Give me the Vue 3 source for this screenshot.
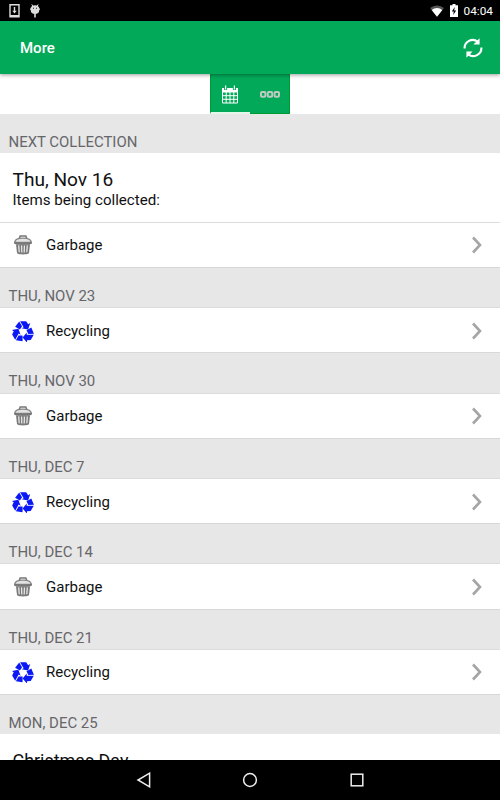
<script setup>
const collections = [
  { date: 'THU, NOV 23', type: 'recycling', label: 'Recycling' },
  { date: 'THU, NOV 30', type: 'garbage', label: 'Garbage' },
  { date: 'THU, DEC 7', type: 'recycling', label: 'Recycling' },
  { date: 'THU, DEC 14', type: 'garbage', label: 'Garbage' },
  { date: 'THU, DEC 21', type: 'recycling', label: 'Recycling' }
]

const next = {
  date: 'Thu, Nov 16',
  items: [{ type: 'garbage', label: 'Garbage' }]
}

// one section per date, the first one carries the summary
const sections = [
  { title: 'NEXT COLLECTION', summary: next, items: next.items },
  ...collections.map((c) => ({ title: c.date, items: [c] }))
]
</script>

<template>
  <div class="screen">
    <!-- shared symbols -->
    <svg class="defs" width="0" height="0">
      <symbol id="icon-garbage" viewBox="0 0 22 22">
        <path d="M7.2 4.8 8.2 2h5.6l1 2.8" fill="none" stroke="#777" stroke-width="1.6" />
        <path d="M2.8 8.4C2.8 5.2 6 4.2 11 4.2s8.2 1 8.2 4.2z" fill="#e4e4e4" stroke="#858585" stroke-width="1.3" />
        <path d="M2.2 7.6c3 1.4 14.6 1.4 17.6 0v2.2c-3 1.2-14.6 1.2-17.6 0z" fill="#777" />
        <path d="M4 10.2h14l-1 9c-2.2 1.6-9.8 1.6-12 0z" fill="#7a7a7a" />
        <path d="M6.7 11.4l.5 6.8M9.6 11.6l.2 7M12.4 11.6l-.2 7M15.3 11.4l-.5 6.8" stroke="#eee" stroke-width="1.2" />
      </symbol>
      <symbol id="icon-recycling" viewBox="-.6 -.6 23.2 23.2">
        <g id="recycle-arm" fill="#0a18f5">
          <path d="M7.9.6h6.4l2.2 3.2 2.2-1.2-2.4 6.7-6.7-1.1 2.1-1.2z" />
          <path d="M7 .9 10 5.9 7.8 9.5 2.7 6.6z" />
        </g>
        <use href="#recycle-arm" transform="rotate(120 11 11.9)" />
        <use href="#recycle-arm" transform="rotate(240 11 11.9)" />
      </symbol>
    </svg>

    <div class="status-bar">
      <div class="status-group">
        <svg width="11" height="14" viewBox="0 0 11 14">
          <path d="M1 .8h9v12H1z" fill="none" stroke="#ddd" stroke-width="1.4" />
          <path d="M1 11h9v2H1zM4.8 3h1.4v3.8h1.5L5.5 9.4 3.3 6.8h1.5z" fill="#ddd" />
        </svg>
        <svg class="bug" width="10" height="14" viewBox="0 0 10 14">
          <path d="M.8 3.6h8.4v2.8a4.2 3.4 0 0 1-8.4 0zM4.2 9h1.6v4.6H4.2z" fill="#ddd" />
          <path d="M1 4.2a4 3 0 0 1 8 0zM0 4.4h10v1.4H0z" fill="#ddd" />
          <path d="M1.8.4l1.2 2M8.2.4 7 2.4" stroke="#ddd" />
          <path d="M3 3.8h1v1H3zM6 3.8h1v1H6z" fill="#222" />
        </svg>
      </div>
      <div class="status-group">
        <svg width="14" height="12" viewBox="0 0 14 12">
          <path d="M0 3.1a10.5 10.5 0 0 1 14 0L7 11.7z" fill="#555" />
          <path d="M1.7 5.1a8 8 0 0 1 10.6 0L7 11.7z" fill="#fff" />
        </svg>
        <svg class="battery" width="8" height="13" viewBox="0 0 8 13">
          <path d="M2.5 0h3v1.3H8V13H0V1.3h2.5z" fill="#fff" />
          <path d="M4.8 3 1.8 7.5h2L3.2 11l3-4.6h-2z" fill="#000" />
        </svg>
        <span class="clock">04:04</span>
      </div>
    </div>

    <header class="app-bar">
      <h1>More</h1>
      <svg width="20" height="20" viewBox="0 0 20 20">
        <g fill="none" stroke="#fff" stroke-width="2.1">
          <path d="M1.6 10.5A8.2 8.2 0 0 1 14.7 3.6" />
          <path d="M18.4 9.5A8.2 8.2 0 0 1 5.3 16.4" />
        </g>
        <path d="M16.6.2v6.2h-6.2zM3.4 19.8v-6.2h6.2z" fill="#fff" />
      </svg>
    </header>

    <nav class="tabs">
      <button class="tab active">
        <svg width="18" height="19" viewBox="0 0 18 19">
          <path d="M1 3h16v4.5H1z" fill="#fff" />
          <path d="M1.5 7v11h15V7M1 10.7h16M1 14.3h16M5.2 7v11M9 7v11M12.8 7v11" fill="none" stroke="#fff" />
          <path d="M4.6 1v4M13.4 1v4" stroke="#02a959" stroke-width="3" />
          <path d="M4.6.5v4M13.4.5v4" stroke="#fff" stroke-width="1.2" />
        </svg>
      </button>
      <button class="tab">
        <svg width="20" height="7" viewBox="0 0 20 7">
          <g fill="none" stroke="#bdc9c1" stroke-width="2">
            <rect x="1" y="1" width="4.4" height="4.8" rx="1" />
            <rect x="7.8" y="1" width="4.4" height="4.8" rx="1" />
            <rect x="14.6" y="1" width="4.4" height="4.8" rx="1" />
          </g>
        </svg>
      </button>
    </nav>

    <main class="list">
      <section v-for="section in sections" :key="section.title">
        <h2 class="section-title">{{ section.title }}</h2>
        <div v-if="section.summary" class="summary">
          <div class="summary-date">{{ section.summary.date }}</div>
          <div class="summary-text">Items being collected:</div>
        </div>
        <div v-for="item in section.items" :key="item.label" class="row">
          <svg class="row-icon" width="22" height="22">
            <use :href="'#icon-' + item.type" />
          </svg>
          <span class="row-label">{{ item.label }}</span>
          <svg class="chevron" width="12" height="18" viewBox="0 0 12 18">
            <path d="M2 1.5 9 9l-7 7.5" fill="none" stroke="#a5a5a7" stroke-width="2.6" />
          </svg>
        </div>
      </section>
      <section>
        <h2 class="section-title">MON, DEC 25</h2>
        <div class="summary">
          <div class="holiday">Christmas Day</div>
        </div>
      </section>
    </main>

    <footer class="nav-bar">
      <svg width="16" height="16" viewBox="0 0 16 16">
        <path d="M13.6 1.2v13.6L2 8z" />
      </svg>
      <svg width="16" height="16" viewBox="0 0 16 16">
        <circle cx="8" cy="8" r="6.4" />
      </svg>
      <svg width="16" height="16" viewBox="0 0 16 16">
        <rect x="2.2" y="2.2" width="11.6" height="11.6" />
      </svg>
    </footer>
  </div>
</template>

<style>
body {
  background: #fff;
}
</style>

<style scoped>
.screen {
  display: flex;
  flex-direction: column;
  width: 500px;
  height: 800px;
  overflow: hidden;
  font-family: Roboto, "Liberation Sans", sans-serif;
  color: #111;
  background: #fff;
}

.defs {
  position: absolute;
}

.status-bar {
  flex: none;
  display: flex;
  justify-content: space-between;
  box-sizing: border-box;
  height: 21px;
  padding: 0 7px 0 9px;
  background: #000;
}

.status-group {
  display: flex;
  align-items: center;
}

.bug {
  margin-left: 10px;
}

.battery {
  margin: 0 6px;
}

.clock {
  color: #fff;
  font-size: 11.8px;
  font-weight: 400;
}

.app-bar {
  flex: none;
  display: flex;
  justify-content: space-between;
  align-items: center;
  position: relative;
  box-sizing: border-box;
  height: 53px;
  padding: 0 17px 0 20px;
  background: #02a959;
  box-shadow: 0 1px 4px rgba(0, 0, 0, 0.4);
}

.app-bar h1 {
  margin: 0;
  color: #fff;
  font-size: 15px;
  font-weight: 500;
}

.tabs {
  flex: none;
  display: flex;
  justify-content: center;
  height: 40px;
}

.tab {
  display: flex;
  justify-content: center;
  align-items: center;
  box-sizing: border-box;
  width: 40px;
  height: 40px;
  padding: 2px 0 0;
  border: 0;
  border-bottom: 1px solid #009a32;
  background: #02a959;
}

.tab:first-child {
  padding-right: 1px;
  border-left: 1px solid #009a32;
}

.tab:last-child {
  border-right: 1px solid #009a32;
}

.tab.active {
  border-bottom: 2px solid #e4f5ea;
}

.list {
  flex: 1;
  min-height: 0;
  overflow: hidden;
}

.section-title {
  box-sizing: border-box;
  height: 39.3px;
  margin: 0;
  padding: 19px 8.5px 0;
  background: #e7e7e7;
  color: #66666a;
  font-size: 14.95px;
  font-weight: 400;
  line-height: 18px;
}

.summary {
  box-sizing: border-box;
  height: 68.4px;
  padding: 15px 12.5px 0;
}

.summary-date {
  font-size: 19.1px;
  line-height: 24px;
}

.holiday {
  font-size: 17.9px;
  line-height: 23px;
}

.summary-text {
  font-size: 15.1px;
  line-height: 17px;
}

.row {
  display: flex;
  align-items: center;
  box-sizing: border-box;
  height: 46.15px;
  padding: 1px 17px 0 12px;
  border-top: 1px solid #dcdcdc;
  border-bottom: 1px solid #d8d8d8;
}

.row-label {
  flex: 1;
  margin-left: 12px;
  font-size: 15px;
}

.nav-bar {
  flex: none;
  display: flex;
  justify-content: center;
  align-items: center;
  gap: 90.5px;
  height: 40px;
  background: #000;
}

.nav-bar svg {
  fill: none;
  stroke: #eee;
  stroke-width: 1.5;
}
</style>
